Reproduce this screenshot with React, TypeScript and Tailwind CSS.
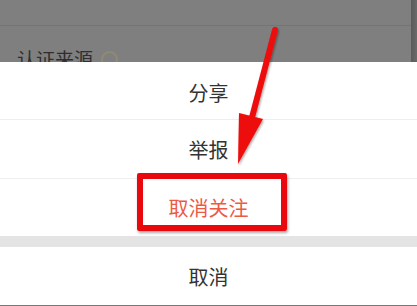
import React from "react";

export default function App() {
  const font = { fontFamily: '"Noto Sans CJK SC", "Noto Sans", sans-serif' };
  return (
    <div className="relative w-[417px] h-[306px] overflow-hidden bg-white" style={font}>
      {/* dimmed background page */}
      <div className="relative h-[62px] bg-[#7f7f7f] overflow-hidden flex">
        <div className="flex-1 flex flex-col">
          <div className="h-[26px] shrink-0 border-b border-[#747474]" />
          <div className="shrink-0 flex items-start pl-[17px] pt-[22px] gap-[8px]">
            <span className="text-[19px] leading-[22px] text-[#2e2e2e]">认证来源</span>
            <span className="mt-[3px] w-[17px] h-[17px] rounded-full border-2 border-[#8f8a70]" />
          </div>
        </div>
        <div className="w-[6px] bg-gradient-to-r from-[#5a5a5a] to-[#6a6a6a]" />
      </div>

      {/* action sheet */}
      <div className="flex flex-col text-[20px] text-[#333]">
        <div className="h-[58px] pt-[4px] flex items-center justify-center border-b border-[#eeeeee]">分享</div>
        <div className="h-[59px] pt-[2px] flex items-center justify-center border-b border-[#eeeeee]">举报</div>
        <div className="h-[57px] flex items-center justify-center text-[#ec5a45]">取消关注</div>
        <div className="h-[11px] bg-[#e4e4e4]" />
        <div className="h-[58px] pt-[2px] flex items-center justify-center">取消</div>
        <div className="h-[1px] bg-[#777]" />
      </div>

      {/* red highlight box */}
      <div className="absolute left-[137px] top-[173px] w-[150px] h-[58px] border-[6px] border-[#e8080e] rounded-[2px] shadow-[1px_2px_3px_rgba(0,0,0,0.35)]" />

      {/* red arrow */}
      <svg className="absolute left-0 top-0" width="417" height="306" viewBox="0 0 417 306">
        <defs>
          <filter id="sh" x="-20%" y="-20%" width="140%" height="140%">
            <feDropShadow dx="1" dy="1.5" stdDeviation="1" floodColor="#000" floodOpacity="0.35" />
          </filter>
        </defs>
        <g filter="url(#sh)">
          <line x1="275" y1="30" x2="250" y2="125" stroke="#ee0a0a" strokeWidth="6" strokeLinecap="round" />
          <polygon points="239,113 263,119 238,164" fill="#ee0a0a" />
        </g>
      </svg>
    </div>
  );
}
